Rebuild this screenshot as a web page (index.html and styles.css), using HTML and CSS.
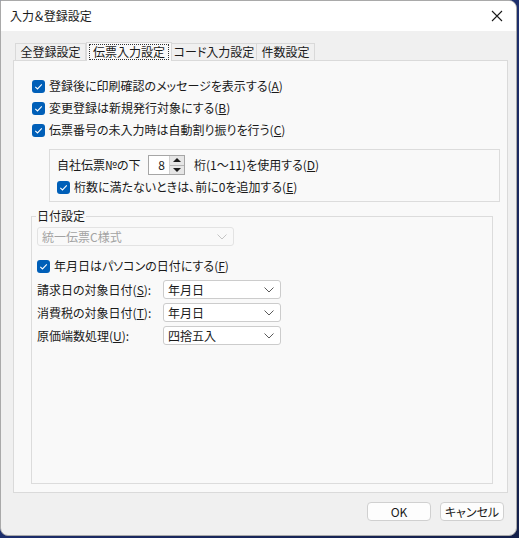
FILE: index.html
```html
<!DOCTYPE html>
<html lang="ja">
<head>
<meta charset="utf-8">
<title>入力＆登録設定</title>
<link rel="stylesheet" href="styles.css">
</head>
<body>
<div class="win">
  <div class="titlebar">
    <span class="title">入力＆登録設定</span>
    <svg class="close" width="12" height="12" viewBox="0 0 12 12"><path d="M1 1L11 11M11 1L1 11" stroke="#1a1a1a" stroke-width="1.1" fill="none"/></svg>
  </div>
  <div class="body">
    <div class="tabs">
      <div class="tab t1">全登録設定</div>
      <div class="tab t2 active"><span class="focus">伝票入力設定</span></div>
      <div class="tab t3">コード入力設定</div>
      <div class="tab t4">件数設定</div>
    </div>
    <div class="panel">
      <div class="checks">
        <label class="row"><span class="cb"><svg width="13" height="13" viewBox="0 0 13 13"><rect width="13" height="13" rx="3" fill="#005fb8"/><path d="M3.3 6.8L5.5 8.9L9.8 4.4" stroke="#fff" stroke-width="1.1" fill="none"/></svg></span>登録後に印刷確認のメッセージを表示する(<u>A</u>)</label>
        <label class="row"><span class="cb"><svg width="13" height="13" viewBox="0 0 13 13"><rect width="13" height="13" rx="3" fill="#005fb8"/><path d="M3.3 6.8L5.5 8.9L9.8 4.4" stroke="#fff" stroke-width="1.1" fill="none"/></svg></span>変更登録は新規発行対象にする(<u>B</u>)</label>
        <label class="row"><span class="cb"><svg width="13" height="13" viewBox="0 0 13 13"><rect width="13" height="13" rx="3" fill="#005fb8"/><path d="M3.3 6.8L5.5 8.9L9.8 4.4" stroke="#fff" stroke-width="1.1" fill="none"/></svg></span>伝票番号の未入力時は自動割り振りを行う(<u>C</u>)</label>
      </div>
      <div class="group1">
        <div class="row">
          <span class="spinlabel">自社伝票№の下</span>
          <span class="spin"><span class="spinval">8</span><span class="spinbtns"><span class="up"></span><span class="down"></span></span></span>
          <span class="spintext">桁(1～11)を使用する(<u>D</u>)</span>
        </div>
        <label class="row"><span class="cb"><svg width="13" height="13" viewBox="0 0 13 13"><rect width="13" height="13" rx="3" fill="#005fb8"/><path d="M3.3 6.8L5.5 8.9L9.8 4.4" stroke="#fff" stroke-width="1.1" fill="none"/></svg></span>桁数に満たないときは、前に0を追加する(<u>E</u>)</label>
      </div>
      <fieldset class="group2">
        <legend>日付設定</legend>
        <div class="combo disabled wide"><span>統一伝票C様式</span><svg width="10" height="6" viewBox="0 0 10 6"><path d="M0.5 0.5L5 5L9.5 0.5" stroke="#c4c4c4" stroke-width="1" fill="none"/></svg></div>
        <label class="row check2"><span class="cb"><svg width="13" height="13" viewBox="0 0 13 13"><rect width="13" height="13" rx="3" fill="#005fb8"/><path d="M3.3 6.8L5.5 8.9L9.8 4.4" stroke="#fff" stroke-width="1.1" fill="none"/></svg></span>年月日はパソコンの日付にする(<u>F</u>)</label>
        <div class="fields">
          <div class="field"><span class="flabel">請求日の対象日付(<u>S</u>):</span><div class="combo"><span>年月日</span><svg width="10" height="6" viewBox="0 0 10 6"><path d="M0.5 0.5L5 5L9.5 0.5" stroke="#5a5a5a" stroke-width="1" fill="none"/></svg></div></div>
          <div class="field"><span class="flabel">消費税の対象日付(<u>T</u>):</span><div class="combo"><span>年月日</span><svg width="10" height="6" viewBox="0 0 10 6"><path d="M0.5 0.5L5 5L9.5 0.5" stroke="#5a5a5a" stroke-width="1" fill="none"/></svg></div></div>
          <div class="field"><span class="flabel">原価端数処理(<u>U</u>):</span><div class="combo"><span>四捨五入</span><svg width="10" height="6" viewBox="0 0 10 6"><path d="M0.5 0.5L5 5L9.5 0.5" stroke="#5a5a5a" stroke-width="1" fill="none"/></svg></div></div>
        </div>
      </fieldset>
    </div>
    <div class="buttons">
      <button class="btn">OK</button>
      <button class="btn">キャンセル</button>
    </div>
  </div>
</div>
</body>
</html>
```

FILE: styles.css
```css
* { box-sizing: border-box; }
html, body { margin: 0; padding: 0; }
body {
  width: 519px;
  height: 538px;
  background: linear-gradient(135deg, #2a4aa8 0%, #1b2a62 60%, #14204a 100%);
  font-family: "Noto Sans CJK JP", "Noto Sans", sans-serif;
  font-size: 12px;
  font-feature-settings: "palt";
  color: #1a1a1a;
  overflow: hidden;
}
.win {
  width: 517px;
  height: 536px;
  border: 1px solid #a9a9a9;
  border-radius: 0 8px 8px 8px;
  overflow: hidden;
  background: #f0f0f0;
  display: flex;
  flex-direction: column;
}
.titlebar {
  height: 30px;
  background: #ffffff;
  display: flex;
  align-items: center;
  justify-content: space-between;
  padding: 0 13px 0 9px;
  flex: none;
}
.title { font-size: 12px; line-height: 16px; }
.close { display: block; }
.body {
  flex: 1;
  display: flex;
  flex-direction: column;
  padding: 11px 8px 0 12px;
}
.tabs {
  display: flex;
  height: 18px;
  padding-left: 2px;
  align-items: flex-end;
  position: relative;
  z-index: 1;
}
.tab {
  height: 17px;
  border: 1px solid #d9d9d9;
  border-bottom: none;
  background: #f0f0f0;
  line-height: 15px;
  padding: 0;
  text-align: center;
  white-space: nowrap;
}
.tab + .tab { border-left: none; }
.t1 { width: 71px; }
.t2 { width: 86px; }
.t3 { width: 85px; }
.t4 { width: 58px; }
.tab.active {
  height: 19px;
  margin-bottom: -1px;
  background: #f9f9f9;
  border-left: 1px solid #d9d9d9;
  padding: 1px 2px 0 2px;
}
.focus {
  display: block;
  border: 1px dotted #333;
  line-height: 14px;
  padding: 0 2px;
  height: 16px;
}
.panel {
  height: 433px;
  background: #f9f9f9;
  border: 1px solid #dadada;
  display: flex;
  flex-direction: column;
  padding: 14px 7px 8px 18px;
  flex: none;
}
.row {
  display: flex;
  align-items: center;
  height: 22px;
  line-height: 16px;
  white-space: nowrap;
}
.cb {
  display: inline-flex;
  width: 13px;
  height: 13px;
  margin-right: 4px;
  flex: none;
}
.cb svg { display: block; }
u { text-decoration: underline; text-underline-offset: 1px; }
.checks { display: flex; flex-direction: column; }
.group1 {
  margin: 8px 0 0 17px;
  border: 1px solid #dcdcdc;
  padding: 4px 0 3px 7px;
}
.spinlabel { width: 91px; }
.spin {
  width: 37px;
  height: 20px;
  border: 1px solid #a6a6a6;
  background: #fff;
  display: flex;
  align-items: stretch;
}
.spinval {
  flex: 1;
  text-align: right;
  padding-right: 4px;
  line-height: 17px;
}
.spinbtns {
  width: 15px;
  display: flex;
  flex-direction: column;
  background: #e6e6e6;
  border-left: 1px solid #d0d0d0;
}
.spinbtns .up, .spinbtns .down {
  flex: 1;
  display: flex;
  align-items: center;
  justify-content: center;
}
.spinbtns .up { border-bottom: 1px solid #b5b5b5; }
.spinbtns .up::before {
  content: "";
  border-left: 4px solid transparent;
  border-right: 4px solid transparent;
  border-bottom: 4px solid #1a1a1a;
}
.spinbtns .down::before {
  content: "";
  border-left: 4px solid transparent;
  border-right: 4px solid transparent;
  border-top: 4px solid #1a1a1a;
}
.spintext { margin-left: 9px; }
.group2 {
  flex: 1;
  margin: 6px 7px 0 -1px;
  border: 1px solid #dcdcdc;
  padding: 3px 5px 0 5px;
  min-width: 0;
}
.group2 legend {
  padding: 0 1px;
  margin-left: -1px;
  line-height: 16px;
}
.combo {
  height: 19px;
  width: 118px;
  border: 1px solid #cccccc;
  border-radius: 3px;
  background: #ffffff;
  display: flex;
  align-items: center;
  justify-content: space-between;
  padding: 0 6px 0 4px;
  line-height: 16px;
}
.combo svg { display: block; }
.combo.wide { width: 197px; }
.combo.disabled {
  background: #f9f9f9;
  border-color: #e3e3e3;
  color: #a3a3a3;
}
.check2 { margin-top: 9px; }
.fields {
  margin-top: 3px;
  display: flex;
  flex-direction: column;
  gap: 4px;
}
.field {
  display: flex;
  align-items: center;
  height: 19px;
  white-space: nowrap;
}
.flabel { width: 126px; line-height: 16px; }
.buttons {
  display: flex;
  justify-content: flex-end;
  gap: 9px;
  margin-top: 9px;
  padding-right: 4px;
}
.btn {
  width: 64px;
  height: 19px;
  border: 1px solid #d0d0d0;
  border-radius: 4px;
  background: #fdfdfd;
  font-family: "Noto Sans CJK JP", "Noto Sans", sans-serif;
  font-size: 12px;
  font-feature-settings: "palt";
  color: #1a1a1a;
  padding: 0;
  line-height: 16px;
}
```
